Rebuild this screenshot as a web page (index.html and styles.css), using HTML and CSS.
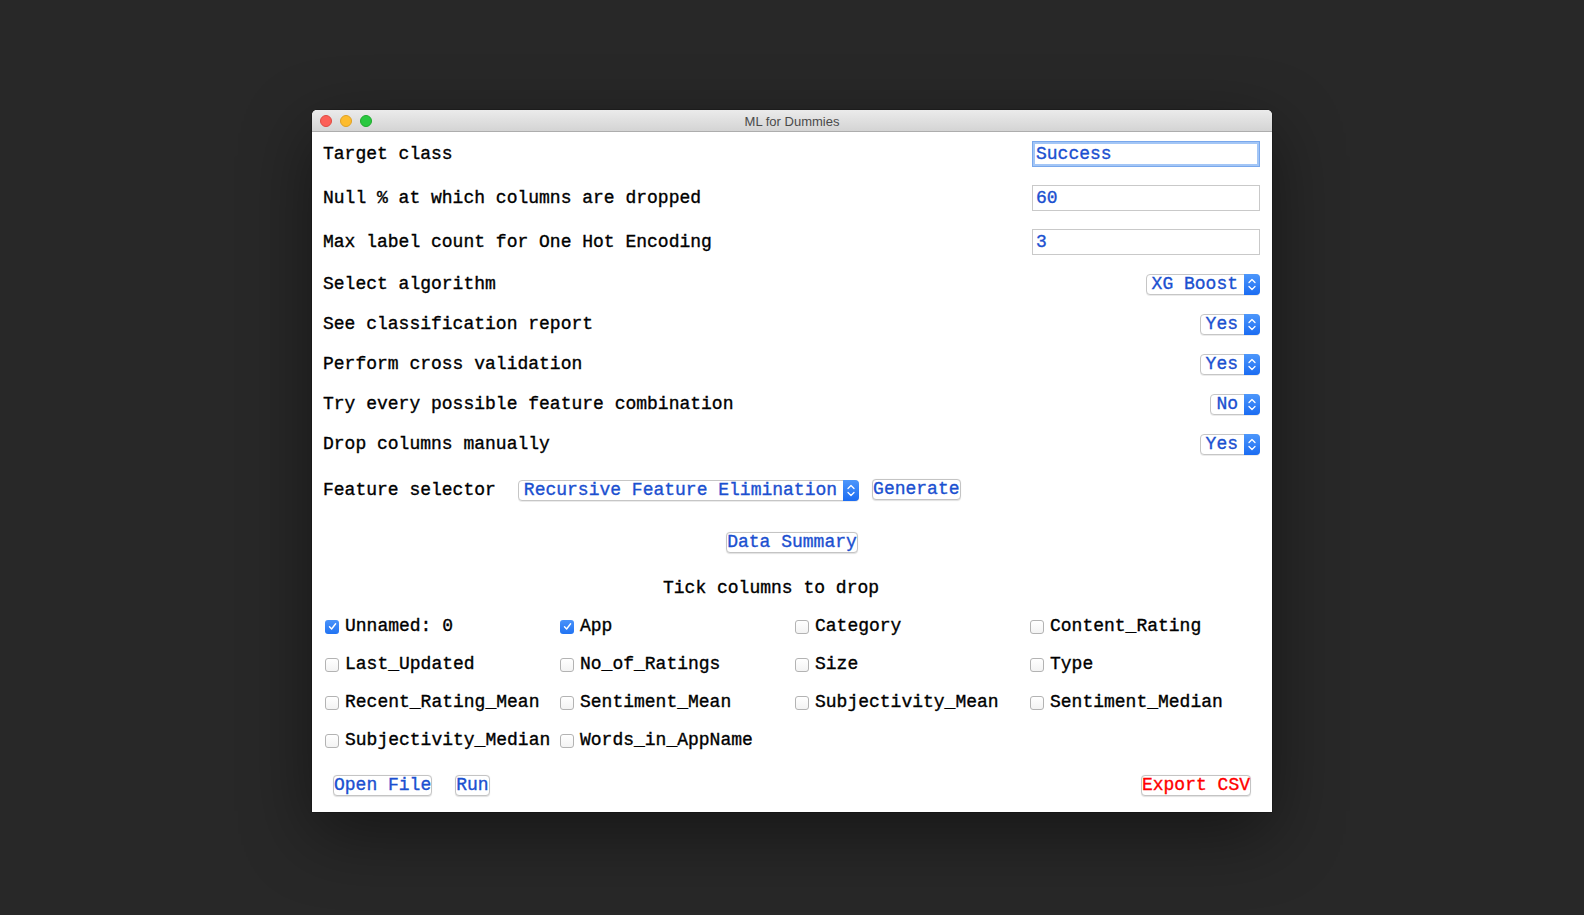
FILE: index.html
```html
<!DOCTYPE html>
<html>
<head>
<meta charset="utf-8">
<title>ML for Dummies</title>
<link rel="stylesheet" href="styles.css">
</head>
<body>
<div class="stage">
  <div class="window">
    <div class="titlebar">
      <div class="lights">
        <span class="light red"></span>
        <span class="light yellow"></span>
        <span class="light green"></span>
      </div>
      <div class="title">ML for Dummies</div>
      <div></div>
    </div>
    <div class="content">
      <div class="row entry-row">
        <span class="label">Target class</span>
        <div class="entry focus">Success</div>
      </div>
      <div class="row entry-row">
        <span class="label">Null % at which columns are dropped</span>
        <div class="entry">60</div>
      </div>
      <div class="row entry-row">
        <span class="label">Max label count for One Hot Encoding</span>
        <div class="entry">3</div>
      </div>

      <div class="row opt-row">
        <span class="label">Select algorithm</span>
        <div class="menu"><span class="menu-text">XG Boost</span><span class="arrow"><svg width="16" height="21" viewBox="0 0 16 21"><path d="M5 8.5 L8 5.5 L11 8.5 M5 12.5 L8 15.5 L11 12.5" fill="none" stroke="#fff" stroke-width="1.3" stroke-linecap="round" stroke-linejoin="round"/></svg></span></div>
      </div>
      <div class="row opt-row">
        <span class="label">See classification report</span>
        <div class="menu"><span class="menu-text">Yes</span><span class="arrow"><svg width="16" height="21" viewBox="0 0 16 21"><path d="M5 8.5 L8 5.5 L11 8.5 M5 12.5 L8 15.5 L11 12.5" fill="none" stroke="#fff" stroke-width="1.3" stroke-linecap="round" stroke-linejoin="round"/></svg></span></div>
      </div>
      <div class="row opt-row">
        <span class="label">Perform cross validation</span>
        <div class="menu"><span class="menu-text">Yes</span><span class="arrow"><svg width="16" height="21" viewBox="0 0 16 21"><path d="M5 8.5 L8 5.5 L11 8.5 M5 12.5 L8 15.5 L11 12.5" fill="none" stroke="#fff" stroke-width="1.3" stroke-linecap="round" stroke-linejoin="round"/></svg></span></div>
      </div>
      <div class="row opt-row">
        <span class="label">Try every possible feature combination</span>
        <div class="menu"><span class="menu-text">No</span><span class="arrow"><svg width="16" height="21" viewBox="0 0 16 21"><path d="M5 8.5 L8 5.5 L11 8.5 M5 12.5 L8 15.5 L11 12.5" fill="none" stroke="#fff" stroke-width="1.3" stroke-linecap="round" stroke-linejoin="round"/></svg></span></div>
      </div>
      <div class="row opt-row">
        <span class="label">Drop columns manually</span>
        <div class="menu"><span class="menu-text">Yes</span><span class="arrow"><svg width="16" height="21" viewBox="0 0 16 21"><path d="M5 8.5 L8 5.5 L11 8.5 M5 12.5 L8 15.5 L11 12.5" fill="none" stroke="#fff" stroke-width="1.3" stroke-linecap="round" stroke-linejoin="round"/></svg></span></div>
      </div>

      <div class="feature-row">
        <span class="label">Feature selector</span>
        <div class="menu feature-menu"><span class="menu-text">Recursive Feature Elimination</span><span class="arrow"><svg width="16" height="21" viewBox="0 0 16 21"><path d="M5 8.5 L8 5.5 L11 8.5 M5 12.5 L8 15.5 L11 12.5" fill="none" stroke="#fff" stroke-width="1.3" stroke-linecap="round" stroke-linejoin="round"/></svg></span></div>
        <button class="btn generate">Generate</button>
      </div>

      <div class="summary-row">
        <button class="btn">Data Summary</button>
      </div>

      <div class="tick-row">Tick columns to drop</div>

      <div class="checks">
        <label class="check"><span class="box on"><svg width="13" height="13" viewBox="0 0 13 13"><path d="M3.5 6.8 L5.6 9 L9.6 3.8" fill="none" stroke="#fff" stroke-width="1.4" stroke-linecap="round" stroke-linejoin="round"/></svg></span>Unnamed: 0</label>
        <label class="check"><span class="box on"><svg width="13" height="13" viewBox="0 0 13 13"><path d="M3.5 6.8 L5.6 9 L9.6 3.8" fill="none" stroke="#fff" stroke-width="1.4" stroke-linecap="round" stroke-linejoin="round"/></svg></span>App</label>
        <label class="check"><span class="box"></span>Category</label>
        <label class="check"><span class="box"></span>Content_Rating</label>
        <label class="check"><span class="box"></span>Last_Updated</label>
        <label class="check"><span class="box"></span>No_of_Ratings</label>
        <label class="check"><span class="box"></span>Size</label>
        <label class="check"><span class="box"></span>Type</label>
        <label class="check"><span class="box"></span>Recent_Rating_Mean</label>
        <label class="check"><span class="box"></span>Sentiment_Mean</label>
        <label class="check"><span class="box"></span>Subjectivity_Mean</label>
        <label class="check"><span class="box"></span>Sentiment_Median</label>
        <label class="check"><span class="box"></span>Subjectivity_Median</label>
        <label class="check"><span class="box"></span>Words_in_AppName</label>
      </div>

      <div class="bottom-row">
        <button class="btn">Open File</button>
        <button class="btn run">Run</button>
        <button class="btn export">Export CSV</button>
      </div>
    </div>
  </div>
</div>
</body>
</html>
```

FILE: styles.css
```css
html, body {
  margin: 0;
  padding: 0;
}

body {
  background: #282828;
  height: 915px;
  overflow: hidden;
  font-family: "Liberation Mono", monospace;
}

.stage {
  display: flex;
  justify-content: center;
  padding-top: 110px;
}

.window {
  width: 960px;
  height: 702px;
  background: #ffffff;
  border-radius: 5px 5px 0 0;
  box-shadow: 0 22px 70px rgba(0, 0, 0, 0.45), 0 0 0 0.5px rgba(0, 0, 0, 0.4);
  overflow: hidden;
  display: flex;
  flex-direction: column;
}

/* ---------- title bar ---------- */
.titlebar {
  height: 21px;
  flex: none;
  border-bottom: 1px solid #adadad;
  background: linear-gradient(#ebebeb, #d4d4d4);
  display: grid;
  grid-template-columns: 1fr auto 1fr;
  align-items: center;
}

.lights {
  display: flex;
  gap: 8px;
  padding-left: 8px;
  padding-top: 1px;
}

.light {
  width: 12px;
  height: 12px;
  border-radius: 50%;
  box-sizing: border-box;
}

.light.red {
  background: #fc5f57;
  border: 0.5px solid #de4a41;
}

.light.yellow {
  background: #fdbc2e;
  border: 0.5px solid #dea024;
}

.light.green {
  background: #29c840;
  border: 0.5px solid #1eaa2c;
}

.title {
  font-family: "Liberation Sans", "Helvetica Neue", sans-serif;
  font-size: 13px;
  color: #4a4a4a;
  padding-top: 1px;
}

/* ---------- content ---------- */
.content {
  flex: 1;
  display: flex;
  flex-direction: column;
  padding: 0 12px 0 11px;
  font-size: 18px;
  color: #000000;
  -webkit-text-stroke: 0.35px currentColor;
}

.row {
  display: flex;
  align-items: center;
  justify-content: space-between;
}

.entry-row {
  height: 44px;
}

.opt-row {
  height: 40px;
}

.label {
  white-space: pre;
}

.entry {
  width: 228px;
  height: 26px;
  box-sizing: border-box;
  border: 1px solid #c9c9c9;
  padding-left: 3px;
  color: #1b50d0;
  display: flex;
  align-items: center;
}

.entry.focus {
  border: 1px solid #79a8ec;
  box-shadow: inset 0 0 0 2px #a3c6f6;
}

/* ---------- option menus ---------- */
.menu {
  display: flex;
  height: 21px;
  box-sizing: border-box;
  border: 1px solid #c6c6c6;
  border-radius: 4px;
  background: #ffffff;
  box-shadow: 0 1px 0.5px rgba(0, 0, 0, 0.08);
}

.menu-text {
  color: #1b50d0;
  line-height: 19px;
  padding: 0 6px 0 5px;
  white-space: pre;
}

.arrow {
  width: 16px;
  margin: -1px -1px -1px 0;
  border-radius: 0 4px 4px 0;
  background: linear-gradient(#4d97fb, #1b6cf2);
  display: flex;
  align-items: center;
  justify-content: center;
  -webkit-text-stroke: 0;
}

.arrow svg {
  display: block;
}

/* ---------- feature row ---------- */
.feature-row {
  height: 52px;
  display: flex;
  align-items: center;
}

.feature-menu {
  margin-left: 22px;
}

.generate {
  margin-left: 13px;
  margin-bottom: 1px;
}

/* ---------- buttons ---------- */
.btn {
  font-family: "Liberation Mono", monospace;
  font-size: 18px;
  color: #1b50d0;
  -webkit-text-stroke: 0.35px currentColor;
  background: #ffffff;
  border: 1px solid #c4c4c4;
  border-radius: 4px;
  padding: 0;
  height: 21px;
  line-height: 19px;
  box-shadow: 0 0.5px 1px rgba(0, 0, 0, 0.12);
  white-space: pre;
}

.summary-row {
  height: 52px;
  display: flex;
  align-items: center;
  justify-content: center;
  padding-left: 1px;
}

.tick-row {
  height: 39px;
  display: flex;
  align-items: center;
  padding-left: 340px;
  white-space: pre;
}

/* ---------- checkboxes ---------- */
.checks {
  display: grid;
  grid-template-columns: repeat(4, 235px);
  grid-auto-rows: 38px;
  padding-left: 2px;
}

.check {
  display: flex;
  align-items: center;
  gap: 6px;
  white-space: pre;
}

.box {
  width: 14px;
  height: 14px;
  box-sizing: border-box;
  border: 1px solid #b3b3b3;
  border-radius: 3px;
  background: linear-gradient(#ffffff, #f3f3f3);
  flex: none;
  display: flex;
  align-items: center;
  justify-content: center;
  margin-top: 1px;
}

.box.on {
  border: none;
  background: linear-gradient(#4a93fa, #2173f3);
}

.box svg {
  display: block;
}

/* ---------- bottom row ---------- */
.bottom-row {
  display: flex;
  align-items: flex-start;
  padding: 16px 9px 0 10px;
}

.run {
  margin-left: 23px;
}

.export {
  margin-left: auto;
  color: #ff0000;
}
```
